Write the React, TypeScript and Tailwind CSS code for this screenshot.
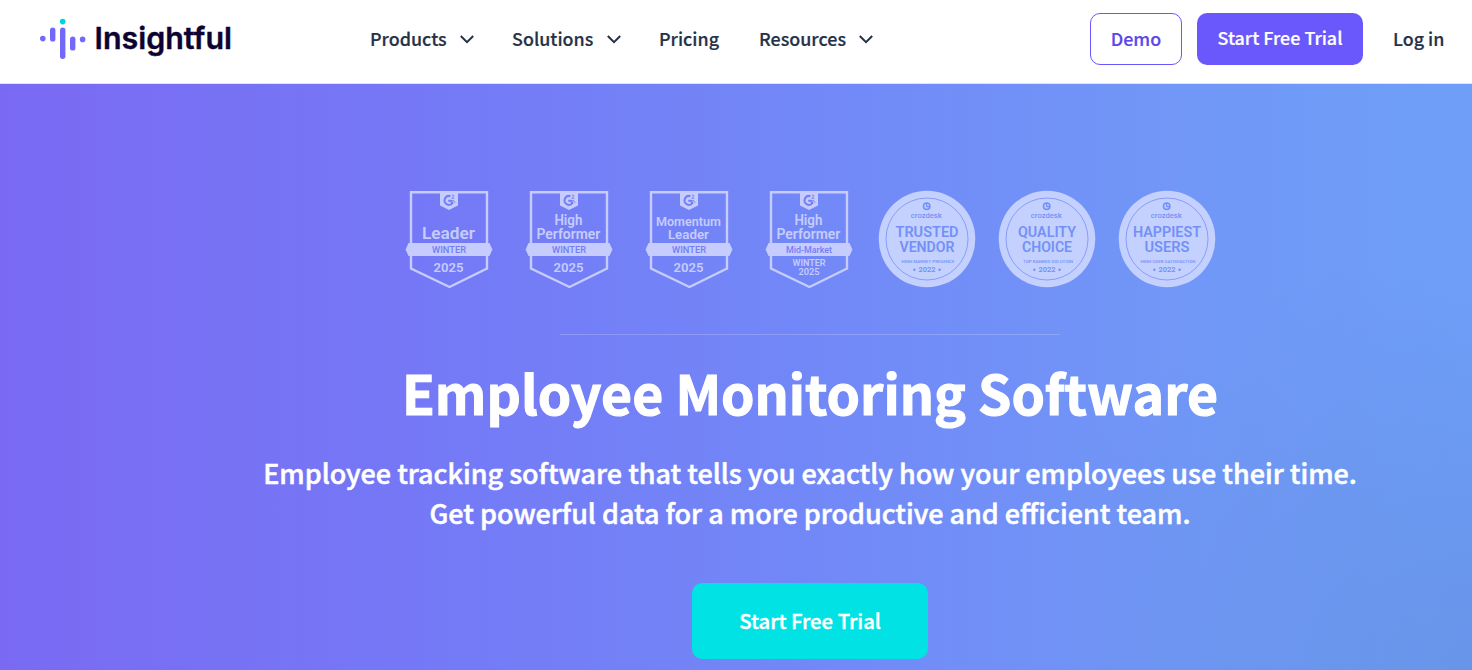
import { clsx } from 'clsx';

const NAV_ITEMS = [
  { label: 'Products', width: 'w-[77px]', gap: 'mr-[38px]', menu: true },
  { label: 'Solutions', width: 'w-[82px]', gap: 'mr-[38px]', menu: true },
  { label: 'Pricing', width: 'w-[61px]', gap: 'mr-[39px]', menu: false },
  { label: 'Resources', width: 'w-[87px]', gap: '', menu: true },
];

type G2 = { lines: { text: string; y: number; size: number; width: number }[]; ribbon: string; season?: boolean };

const G2_BADGES: G2[] = [
  { lines: [{ text: 'Leader', y: 49, size: 16.5, width: 53 }], ribbon: 'WINTER' },
  {
    lines: [
      { text: 'High', y: 35, size: 14, width: 28 },
      { text: 'Performer', y: 49, size: 14, width: 64 },
    ],
    ribbon: 'WINTER',
  },
  {
    lines: [
      { text: 'Momentum', y: 36, size: 13, width: 65 },
      { text: 'Leader', y: 49, size: 13, width: 41 },
    ],
    ribbon: 'WINTER',
  },
  {
    lines: [
      { text: 'High', y: 35, size: 14, width: 28 },
      { text: 'Performer', y: 49, size: 14, width: 64 },
    ],
    ribbon: 'Mid-Market',
    season: true,
  },
];

const CROZDESK_BADGES = [
  { top: 'TRUSTED', topWidth: 63, bottom: 'VENDOR', bottomWidth: 55, note: 'HIGH MARKET PRESENCE', noteWidth: 53 },
  { top: 'QUALITY', topWidth: 58, bottom: 'CHOICE', bottomWidth: 50, note: 'TOP RANKED SOLUTION', noteWidth: 50 },
  { top: 'HAPPIEST', topWidth: 68, bottom: 'USERS', bottomWidth: 45, note: 'HIGH USER SATISFACTION', noteWidth: 55 },
];

function Logo() {
  return (
    <svg width="200" height="48" viewBox="0 0 200 48" aria-label="Insightful">
      <g fill="#7468fb">
        <circle cx="2.8" cy="20.6" r="2.8" />
        <rect x="10" y="9.4" width="5.4" height="14.2" rx="2.7" />
        <rect x="20" y="9.4" width="5.4" height="31.6" rx="2.7" />
        <rect x="30" y="18.6" width="5.4" height="14" rx="2.7" />
        <circle cx="42.6" cy="21.4" r="2.8" />
      </g>
      <circle cx="22.7" cy="3.6" r="2.8" fill="#00d2dc" />
      <text
        x="54.5"
        y="30.5"
        textLength="137.5"
        lengthAdjust="spacingAndGlyphs"
        fontFamily="Inter, sans-serif"
        fontSize="30.5"
        fontWeight="600"
        fill="#0d0333"
        stroke="#0d0333"
        strokeWidth="0.4"
      >
        Insightful
      </text>
    </svg>
  );
}

function Chevron() {
  return (
    <svg className="ml-[13px]" width="14" height="9" viewBox="0 0 14 9" fill="none" stroke="#263148" strokeWidth="2">
      <path d="M0.8 1 L7 7.2 L13.2 1" />
    </svg>
  );
}

function G2Badge({ badge }: { badge: G2 }) {
  return (
    <svg className="mx-4" width="88" height="100" viewBox="0 0 88 100" fontFamily="Roboto, sans-serif" textAnchor="middle">
      <path d="M6 2.2 H82 V78.5 L44.5 97 L6 78.5 Z" fill="none" stroke="#c6ccfd" strokeWidth="2.4" />
      <path d="M35 1 H53 V15.5 L44 20 L35 15.5 Z" fill="#c6ccfd" />
      <path d="M45.4 6.2 A4.4 4.4 0 1 0 47.4 13.2 L46 10.7 H43.2" fill="none" stroke="#757ff6" strokeWidth="2" />
      <path
        d="M46.8 5.8 C47.2 4.6 49.2 4.8 48.9 6.1 C48.7 6.9 47 7.2 46.9 8.3 H49.4 M47.2 10.6 H48.8 L50 12.8"
        fill="none"
        stroke="#757ff6"
        strokeWidth="0.9"
      />
      {badge.lines.map((line) => (
        <text
          key={line.text}
          x="43.4"
          y={line.y}
          fontSize={line.size}
          fontWeight="600"
          fill="#c6ccfd"
          textLength={line.width}
          lengthAdjust="spacingAndGlyphs"
        >
          {line.text}
        </text>
      ))}
      <path d="M3.5 53 H84.5 L87.4 59.5 L84.5 66 H3.5 L0.6 59.5 Z" fill="#c6ccfd" />
      <text
        x="44"
        y="63"
        fontSize="9.2"
        fontWeight="500"
        fill="#747cf6"
        textLength={badge.season ? 46 : 34}
        lengthAdjust="spacingAndGlyphs"
      >
        {badge.ribbon}
      </text>
      {badge.season ? (
        <g fontSize="9.2" fontWeight="600" fill="#c6ccfd">
          <text x="44" y="76.3" textLength="33" lengthAdjust="spacingAndGlyphs">WINTER</text>
          <text x="44" y="85.3" textLength="21" lengthAdjust="spacingAndGlyphs">2025</text>
        </g>
      ) : (
        <text x="43.5" y="81.8" fontSize="13.5" fontWeight="600" fill="#c6ccfd" textLength="30" lengthAdjust="spacingAndGlyphs">
          2025
        </text>
      )}
    </svg>
  );
}

function CrozdeskBadge({ badge }: { badge: (typeof CROZDESK_BADGES)[number] }) {
  return (
    <svg
      className="mx-[11px]"
      width="98"
      height="100"
      viewBox="0 0 98 100"
      fontFamily="Roboto, sans-serif"
      textAnchor="middle"
      fill="#7390f7"
    >
      <circle cx="49" cy="49" r="48.3" fill="#c4d0fd" />
      <circle cx="49" cy="49" r="41" fill="none" stroke="#8098f8" strokeWidth="0.9" />
      <circle cx="48.7" cy="16.2" r="3.2" fill="none" stroke="#7390f7" strokeWidth="1.5" />
      <path d="M48.6 12.8 V16.6 H51.5" fill="none" stroke="#7390f7" strokeWidth="1.3" />
      <text x="48.3" y="28.4" fontSize="7.4" fontWeight="500" textLength="31" lengthAdjust="spacingAndGlyphs">
        crozdesk
      </text>
      <g fontSize="14" fontWeight="600">
        <text x="49" y="47" textLength={badge.topWidth} lengthAdjust="spacingAndGlyphs">{badge.top}</text>
        <text x="49" y="61.6" textLength={badge.bottomWidth} lengthAdjust="spacingAndGlyphs">{badge.bottom}</text>
      </g>
      <text x="50" y="73.2" fontSize="4.3" fontWeight="500" textLength={badge.noteWidth} lengthAdjust="spacingAndGlyphs">
        {badge.note}
      </text>
      <text x="49" y="82.4" fontSize="7.6" fontWeight="600" textLength="17" lengthAdjust="spacingAndGlyphs">
        2022
      </text>
      <circle cx="36.4" cy="79.8" r="1.2" />
      <circle cx="61.6" cy="79.8" r="1.2" />
    </svg>
  );
}

function Header() {
  return (
    <header className="flex h-[84px] items-start border-b border-[#e3e3f6] bg-white text-[17.9px] font-medium leading-[26px] text-[#263148] [-webkit-text-stroke:0.2px]">
      <a href="#" className="ml-10 mt-[18px] w-[330px] [-webkit-text-stroke:0]">
        <Logo />
      </a>
      <nav className="mt-[25px] flex">
        {NAV_ITEMS.map((item) => (
          <a key={item.label} href="#" className={clsx('flex items-center whitespace-nowrap', item.gap)}>
            <span className={clsx('pb-0.5', item.width)}>{item.label}</span>
            {item.menu && <Chevron />}
          </a>
        ))}
      </nav>
      <div className="ml-auto mt-[13px] flex items-center whitespace-nowrap">
        <a href="#" className="flex h-[52px] w-[92px] items-center justify-center rounded-[10px] border border-[#6957fb] pb-0.5 text-[#5d47ea]">
          Demo
        </a>
        <a href="#" className="ml-[15px] flex h-[52px] w-[166px] items-center justify-center rounded-[10px] bg-[#6b58fd] pb-1 text-white">
          Start Free Trial
        </a>
        <a href="#" className="ml-[30px] mr-[27px] w-[52px] pb-0.5">
          Log in
        </a>
      </div>
    </header>
  );
}

export default function App() {
  return (
    <div className="h-[670px] overflow-hidden font-['Noto_Sans_CJK_SC',sans-serif]">
      <Header />
      <main className="flex h-[586px] flex-col items-center bg-[radial-gradient(ellipse_480px_420px_at_100%_100%,#6690e4b8,#6690e400),linear-gradient(90deg,#7a6af3_0%,#7578f6_28%,#7288f7_55%,#7197f7_80%,#6e9ff8_100%)] pl-[148px] text-center text-white">
        <div className="mr-[5px] mt-[106px] flex">
          {G2_BADGES.map((badge, i) => (
            <G2Badge key={i} badge={badge} />
          ))}
          <div className="-ml-0.5 flex">
            {CROZDESK_BADGES.map((badge) => (
              <CrozdeskBadge key={badge.top} badge={badge} />
            ))}
          </div>
        </div>
        <hr className="mt-11 w-[500px] border-white/20" />
        <h1 className="mt-[22px] whitespace-nowrap text-[53.5px] font-bold leading-[70px] [-webkit-text-stroke:1.1px]">
          Employee Monitoring Software
        </h1>
        <p className="mt-[26px] whitespace-nowrap text-[26.95px] font-medium leading-10 [-webkit-text-stroke:0.5px]">
          Employee tracking software that tells you exactly how your employees use their time.
          <br />
          Get powerful data for a more productive and efficient team.
        </p>
        <a
          href="#"
          className="mt-[50px] flex h-[76px] w-[236px] shrink-0 items-center justify-center rounded-[10px] bg-[#00e2e4] pb-0.5 text-[20.3px] font-medium [-webkit-text-stroke:0.4px]"
        >
          Start Free Trial
        </a>
      </main>
    </div>
  );
}
